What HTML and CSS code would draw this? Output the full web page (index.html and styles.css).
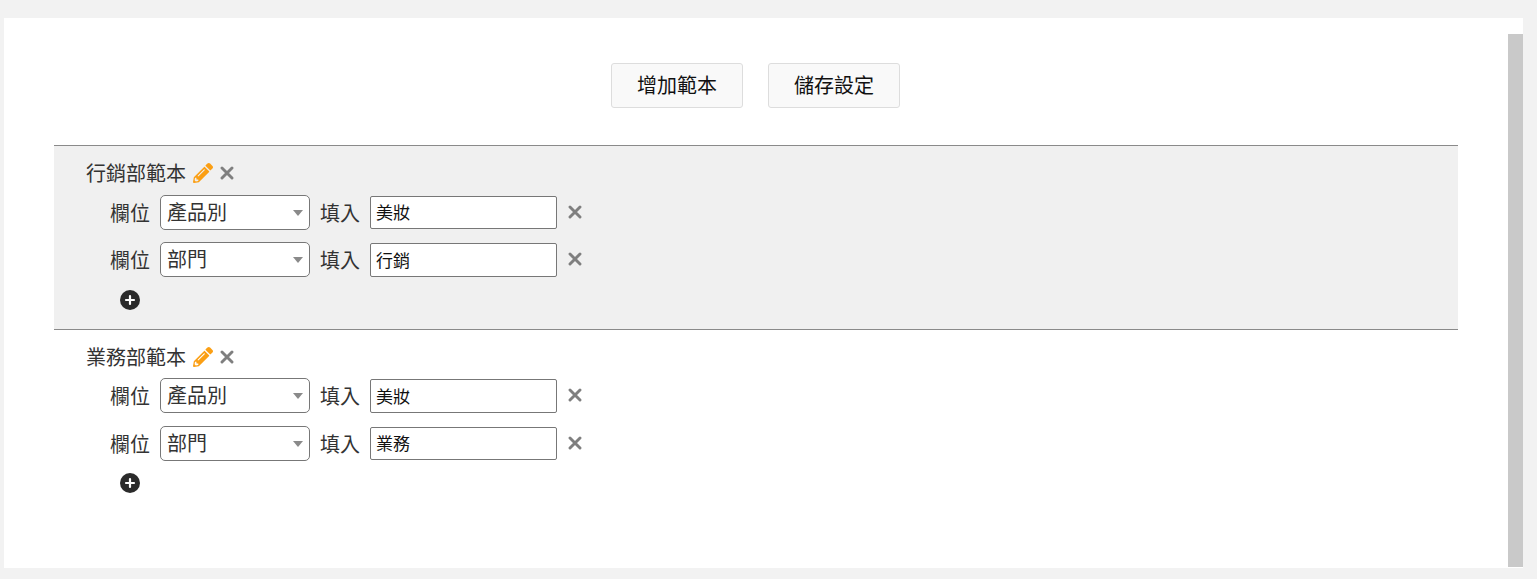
FILE: index.html
```html
<!DOCTYPE html>
<html lang="zh-Hant">
<head>
<meta charset="utf-8">
<title>範本設定</title>
<link rel="stylesheet" href="styles.css">
</head>
<body>
<svg class="defs" width="0" height="0" aria-hidden="true">
  <defs>
    <symbol id="pencil" viewBox="0 0 512 512"><path d="M497.9 142.1l-46.1 46.1c-4.7 4.7-12.3 4.7-17 0l-111-111c-4.7-4.7-4.7-12.3 0-17l46.1-46.1c18.7-18.7 49.1-18.7 67.9 0l60.1 60.1c18.8 18.7 18.8 49.1 0 67.9zM284.2 99.8L21.6 362.4.4 483.9c-2.9 16.4 11.4 30.6 27.8 27.8l121.5-21.3 262.6-262.6c4.7-4.7 4.7-12.3 0-17l-111-111c-4.8-4.7-12.4-4.7-17.1 0zM124.1 339.9c-5.5-5.5-5.5-14.3 0-19.8l154-154c5.5-5.5 14.3-5.5 19.8 0s5.5 14.3 0 19.8l-154 154c-5.5 5.5-14.3 5.5-19.8 0zM88 424h48v36.3l-64.5 11.3-31.1-31.1L51.7 376H88v48z"/></symbol>
    <symbol id="cross" viewBox="0 0 14 14"><path d="M2 2L12 12M12 2L2 12" fill="none" stroke="currentColor" stroke-width="2.9" stroke-linecap="round"/></symbol>
    <symbol id="plus" viewBox="0 0 20 20"><circle cx="10" cy="10" r="10" fill="#2b2b2b"/><path d="M10 6V14M6 10H14" fill="none" stroke="#fff" stroke-width="2.2" stroke-linecap="round"/></symbol>
  </defs>
</svg>
<div class="panel">
  <main class="content">
    <div class="actions">
      <button class="btn" type="button">增加範本</button>
      <button class="btn" type="button">儲存設定</button>
    </div>
    <section class="group group-shaded">
      <div class="group-title"><span>行銷部範本</span><svg class="ic-pencil"><use href="#pencil"/></svg><svg class="ic-cross ic-cross-title"><use href="#cross"/></svg></div>
      <div class="row">
        <span class="lbl">欄位</span>
        <span class="select-wrap"><select class="sel"><option>產品別</option><option>部門</option></select></span>
        <span class="lbl lbl-fill">填入</span>
        <input class="txt" type="text" value="美妝">
        <svg class="ic-cross"><use href="#cross"/></svg>
      </div>
      <div class="row">
        <span class="lbl">欄位</span>
        <span class="select-wrap"><select class="sel"><option>部門</option><option>產品別</option></select></span>
        <span class="lbl lbl-fill">填入</span>
        <input class="txt" type="text" value="行銷">
        <svg class="ic-cross"><use href="#cross"/></svg>
      </div>
      <svg class="ic-plus"><use href="#plus"/></svg>
    </section>
    <section class="group">
      <div class="group-title"><span>業務部範本</span><svg class="ic-pencil"><use href="#pencil"/></svg><svg class="ic-cross ic-cross-title"><use href="#cross"/></svg></div>
      <div class="row">
        <span class="lbl">欄位</span>
        <span class="select-wrap"><select class="sel"><option>產品別</option><option>部門</option></select></span>
        <span class="lbl lbl-fill">填入</span>
        <input class="txt" type="text" value="美妝">
        <svg class="ic-cross"><use href="#cross"/></svg>
      </div>
      <div class="row">
        <span class="lbl">欄位</span>
        <span class="select-wrap"><select class="sel"><option>部門</option><option>產品別</option></select></span>
        <span class="lbl lbl-fill">填入</span>
        <input class="txt" type="text" value="業務">
        <svg class="ic-cross"><use href="#cross"/></svg>
      </div>
      <svg class="ic-plus"><use href="#plus"/></svg>
    </section>
  </main>
  <div class="scrollbar"></div>
</div>
</body>
</html>
```

FILE: styles.css
```css
* { box-sizing: border-box; }
html, body { height: 100%; }
body {
  margin: 0;
  padding: 18px 14px 11px 4px;
  background: #f2f2f2;
  color: #333;
  font-family: "Noto Sans CJK TC", "Noto Sans", sans-serif;
  font-size: 20px;
  overflow: hidden;
}
.defs { position: absolute; }
.panel {
  display: flex;
  height: 550px;
  background: #fff;
}
.content { flex: 1; min-width: 0; padding: 45px 50px 0; }
.scrollbar {
  flex: none;
  width: 15px;
  margin: 16px 0 1px;
  background: #c9c9c9;
}
.actions {
  display: flex;
  justify-content: center;
  gap: 25px;
  padding-right: 1px;
  margin-bottom: 37px;
}
.btn {
  width: 132px;
  height: 45px;
  padding: 0 0 2px;
  border: 1px solid #ddd;
  border-radius: 3px;
  background: #f9f9f9;
  color: #111;
  font: inherit;
  line-height: 1;
}
.group {
  height: 183.5px;
  padding: 13px 0 0 32px;
  border-top: 1px solid #8a8a8a;
}
.group-shaded { background: #f0f0f0; }
.group-title {
  display: flex;
  align-items: center;
  height: 28px;
  line-height: 28px;
  margin-bottom: 7.85px;
}
.ic-pencil { width: 20px; height: 20px; margin-left: 7px; fill: #fb9f14; }
.ic-cross { width: 14px; height: 14px; color: #7f7f7f; margin: 9.8px 0 0 11px; }
.ic-cross-title { margin: 0 0 0 7px; }
.row {
  display: flex;
  align-items: flex-start;
  height: 35px;
  margin-bottom: 12.5px;
  padding-left: 24px;
}
.lbl { width: 40px; line-height: 35px; }
.lbl-fill { margin-left: 10px; }
.select-wrap {
  position: relative;
  display: block;
  width: 150px;
  height: 35px;
  margin-left: 10px;
}
.select-wrap::after {
  content: "";
  position: absolute;
  right: 7px;
  top: 15px;
  border-left: 5px solid transparent;
  border-right: 5px solid transparent;
  border-top: 6px solid #8a8a8a;
}
.sel {
  display: block;
  width: 100%;
  height: 100%;
  padding: 0 24px 2px 6px;
  border: 1px solid #777;
  border-radius: 5px;
  background: #fff;
  color: #333;
  font: inherit;
  appearance: none;
  outline: none;
}
.txt {
  display: block;
  width: 187px;
  height: 33.4px;
  margin: 1px 0 0 10px;
  padding: 0 5px 2px;
  border: 1px solid #777;
  border-radius: 2px;
  background: #fff;
  color: #111;
  font-family: inherit;
  font-size: 17px;
  outline: none;
}
.ic-plus { display: block; width: 20px; height: 20px; margin: 0 0 0 34px; }
```
